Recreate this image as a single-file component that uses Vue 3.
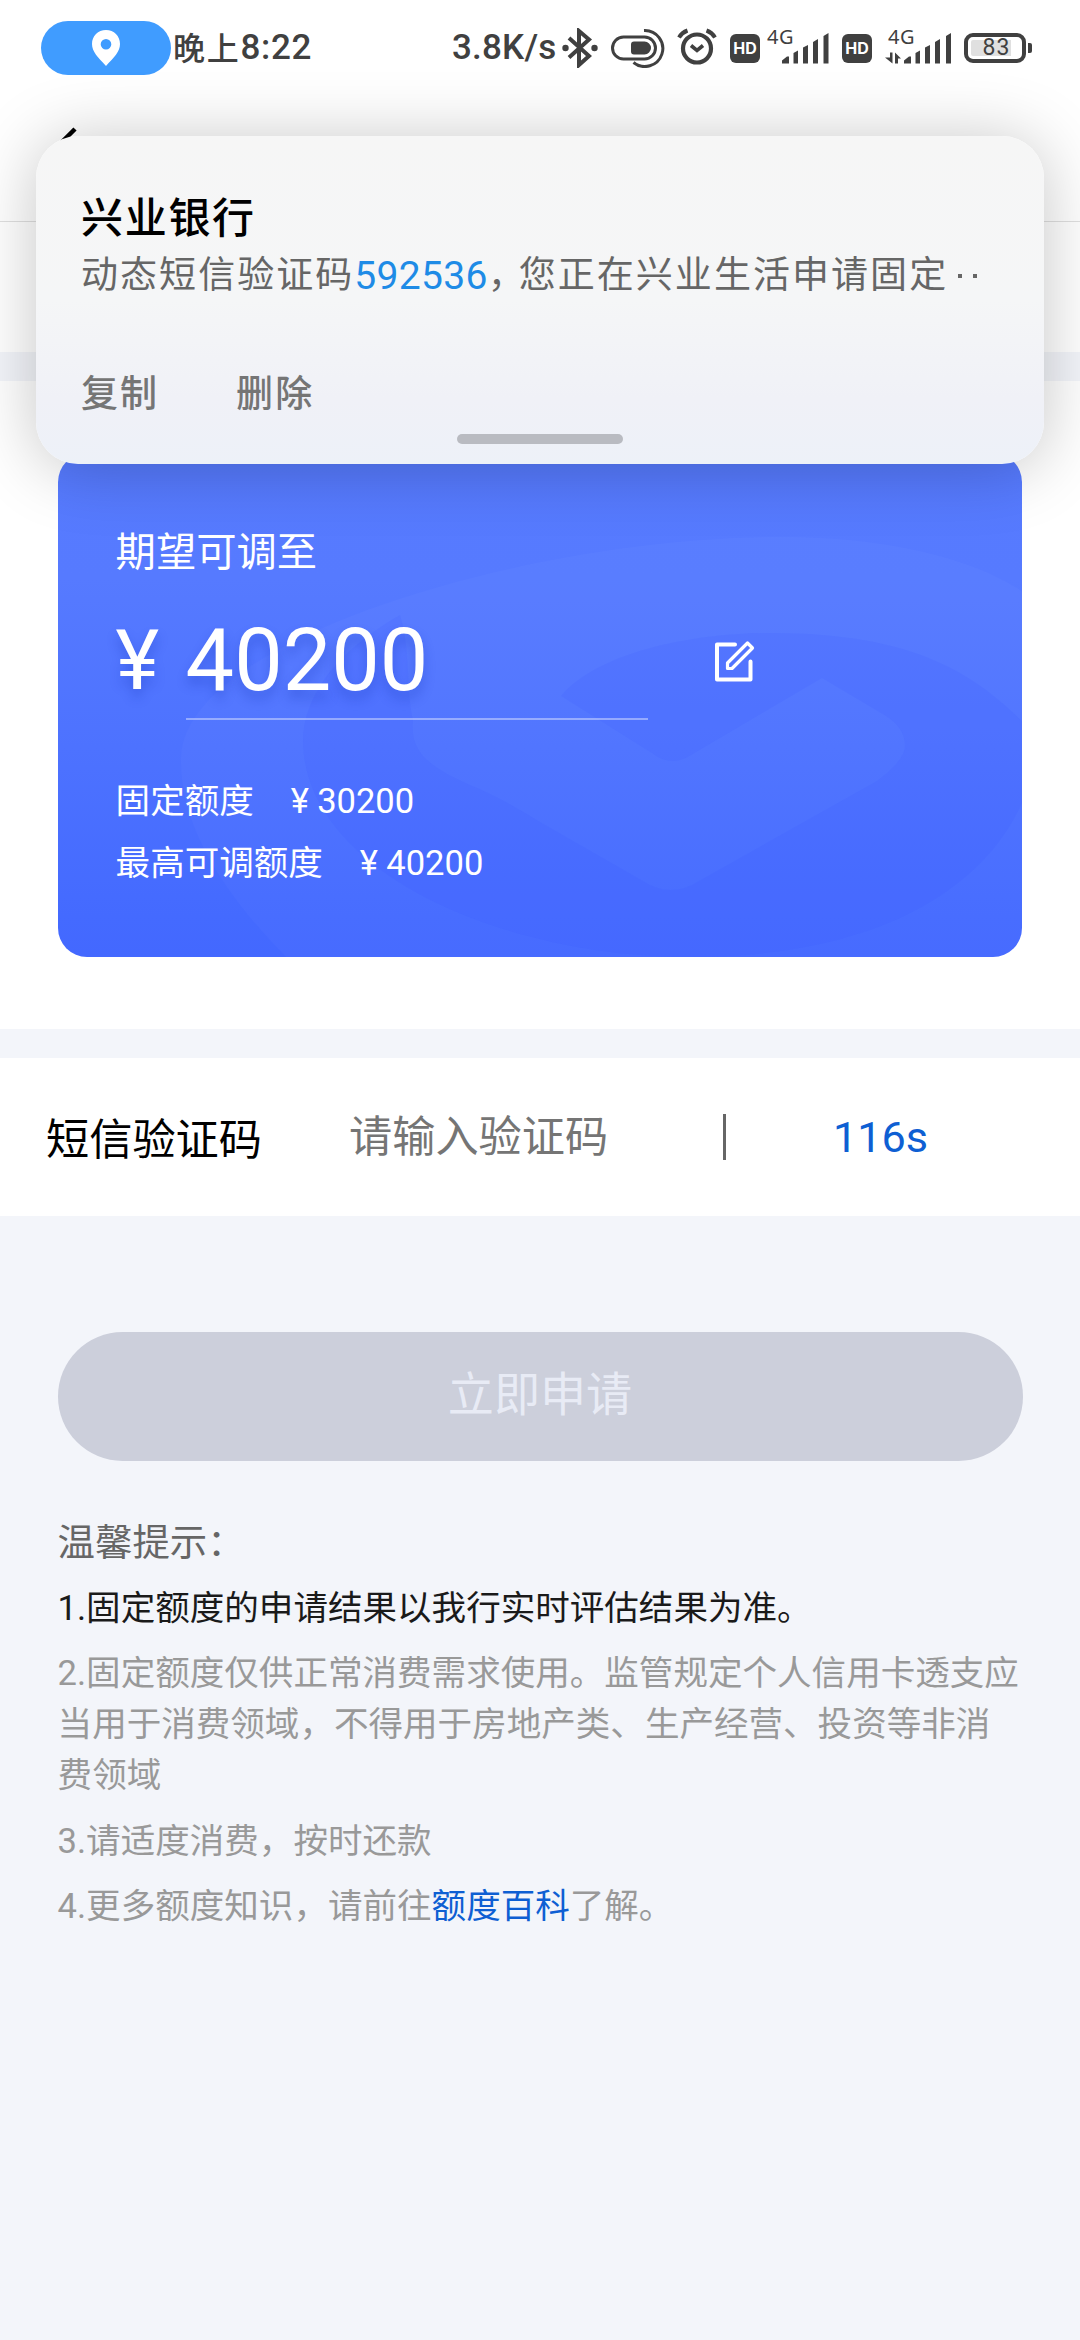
<script setup>
const limits = [
  { label: '固定额度', value: '30200' },
  { label: '最高可调额度', value: '40200' },
]
</script>

<template>
  <div class="screen">
    <header class="status">
      <div class="pill">
        <svg width="28" height="36" viewBox="0 0 28 36">
          <path fill="#fff" fill-rule="evenodd" d="M14 0C6 0 0 6 0 14c0 8 6 13 14 22 8-9 14-14 14-22C28 6 22 0 14 0zm0 9a5.3 5.3 0 1 1 0 10.600a5.300 5.300 0 0 1 0-10.600z" />
        </svg>
      </div>
      <div class="clock"><span class="cn">晚上</span>8:22</div>
      <div class="speed">3.8K/s</div>
      <svg class="bt" width="36" height="40" viewBox="0 0 36 40">
        <path d="M7 10l20 18-10 9V3l10 8.500L7 29.500" fill="none" stroke="#404040" stroke-width="4" stroke-linejoin="miter" />
        <circle cx="3.500" cy="20" r="3.200" fill="#404040" />
        <circle cx="32.500" cy="20" r="3.200" fill="#404040" />
      </svg>
      <svg class="toggle" width="54" height="40" viewBox="0 0 54 40" fill="none" stroke="#404040">
        <path d="M33 2.500a18 18 0 1 1-10.500 32" stroke-width="3" />
        <rect x="1.500" y="9" width="43" height="22" rx="11" stroke-width="3" />
        <path d="M23 13.500h10.500a6.500 6.500 0 0 1 0 13H23a3 3 0 0 1-3-3v-7a3 3 0 0 1 3-3z" fill="#404040" stroke="none" />
      </svg>
      <svg class="alarm" width="40" height="38" viewBox="0 0 40 38" fill="none" stroke="#404040">
        <circle cx="20" cy="20.500" r="14" stroke-width="4.200" />
        <path d="M14 17.500l6 5 6-5" stroke-width="3.600" />
        <path d="M2 9.500Q5 4.500 10.500 2.500M38 9.500Q35 4.500 29.500 2.500" stroke-width="4" />
      </svg>
      <div class="hd hd1">HD</div>
      <div class="cell cell1">
        <span class="net">4G</span>
        <svg width="63" height="35" viewBox="0 0 63 35" fill="#404040">
          <path d="M15 34.500v-3l5-4h2v7zM26.500 34.500V24l4.500-2.500v13zM36 34.500V18.500L41 16v18.500zM46 34.500V13l5-3v24.500zM56.500 34.500V7l5-3v30.500z" />
        </svg>
      </div>
      <div class="hd hd2">HD</div>
      <div class="cell cell2">
        <span class="net">4G</span>
        <svg width="67" height="35" viewBox="0 0 67 35" fill="#404040">
          <path d="M5 23.500h2.500v11L0 28.500h5zM10 34.500v-11l6 6h-3v5z" />
          <path d="M19 34.500v-3l5-4h2v7zM30.500 34.500V24l4.500-2.500v13zM40 34.500V18.500L45 16v18.500zM50 34.500V13l5-3v24.500zM61 34.500V7l5-3v30.500z" />
        </svg>
      </div>
      <div class="battery"><span>83</span></div>
      <i class="nub"></i>
    </header>

    <nav class="navbar">
      <svg width="40" height="56" viewBox="0 0 40 56">
        <path d="M32 5L9 28l23 23" fill="none" stroke="#000" stroke-width="4.500" />
      </svg>
    </nav>
    <div class="blank"></div>
    <div class="band"></div>

    <section class="quota">
      <div class="card">
        <svg class="mark" width="965" height="504" viewBox="58 453 965 504">
          <path fill="#fff" fill-opacity=".025" d="M181 757C185 640 520 540 770 537C900 535 985 565 1023 592V957H286C230 900 179 830 181 757z" />
          <path fill="#3355ff" fill-opacity=".11" d="M561 696C600 650 700 632 775 633C880 634 950 655 1008 708L1023 722V800C990 880 890 957 690 957C500 957 303 870 303 740C304 700 330 655 400 615C411 650 406 690 413 720C410 750 425 765 470 785Q500 797 540 822L643 881Q671 899 699 881L877 781Q905 760 905 746Q905 728 886 716L822 678L691 755Q671 768 652 753z" />
        </svg>
        <div class="want">期望可调至</div>
        <div class="amount">
          <span class="yen">¥</span>
          <span class="value">40200</span>
          <svg width="42" height="42" viewBox="0 0 42 42" fill="none" stroke="#fff" stroke-linejoin="round" stroke-linecap="round">
            <path d="M21 4.500H3V39.500H36.500V21.500" stroke-width="4" />
            <path d="M13.500 28.500V23L33.500 3l5 5-20.500 20.500z" stroke-width="3.200" />
          </svg>
        </div>
        <div v-for="row in limits" :key="row.label" class="limit">
          <span>{{ row.label }}</span>
          <span><span class="unit">¥</span>{{ row.value }}</span>
        </div>
      </div>
    </section>
    <div class="band"></div>

    <section class="sms">
      <label>短信验证码</label>
      <span class="placeholder">请输入验证码</span>
      <i class="divider"></i>
      <span class="countdown">116s</span>
    </section>

    <button class="apply" disabled>立即申请</button>

    <section class="tips">
      <h4>温馨提示：</h4>
      <p class="strong">1.固定额度的申请结果以我行实时评估结果为准。</p>
      <p>2.固定额度仅供正常消费需求使用。监管规定个人信用卡透支应当用于消费领域，不得用于房地产类、生产经营、投资等非消费领域</p>
      <p>3.请适度消费，按时还款</p>
      <p>4.更多额度知识，请前往<a>额度百科</a>了解。</p>
    </section>

    <aside class="notice">
      <div class="title">兴业银行</div>
      <div class="message">动态短信验证码<b>592536</b><span class="comma">，</span>您正在兴业生活申请固定<span class="dots"><i></i><i></i></span></div>
      <div class="actions"><span>复制</span><span>删除</span></div>
      <div class="handle"></div>
    </aside>
  </div>
</template>

<style>
body {
  margin: 0;
  background: #f3f5fa;
}
</style>

<style scoped>
.screen {
  position: relative;
  width: 1080px;
  height: 2340px;
  overflow: hidden;
  background: #f3f5fa;
  font-family: Roboto, "Noto Sans CJK SC", sans-serif;
}
.screen * {
  box-sizing: border-box;
}
.status {
  display: flex;
  align-items: flex-start;
  height: 96px;
  padding-left: 41px;
  background: #fff;
  color: #404040;
  white-space: nowrap;
}
.status > * {
  flex: none;
}
.pill {
  display: flex;
  align-items: center;
  justify-content: center;
  width: 130px;
  height: 54px;
  margin-top: 21px;
  border-radius: 27px;
  background: #409cff;
}
.clock {
  display: flex;
  width: 142px;
  margin: 27px 0 0 2px;
  font-size: 35px;
  line-height: 42px;
  font-weight: 500;
  letter-spacing: 0.700px;
}
.clock .cn {
  font-family: "Noto Sans CJK SC", sans-serif;
  font-size: 32px;
  line-height: 39px;
  letter-spacing: 1.700px;
}
.speed {
  width: 104px;
  margin: 27px 0 0 137px;
  font-size: 35px;
  line-height: 42px;
  font-weight: 500;
  letter-spacing: 0.200px;
}
.bt {
  margin: 28px 0 0 6px;
}
.toggle {
  margin: 28px 0 0 13px;
}
.alarm {
  margin: 28px 0 0 12px;
}
.hd {
  width: 30px;
  height: 29px;
  margin-top: 34px;
  border-radius: 6px;
  background: #404040;
  color: #fff;
  font: 700 16px/29px Inter, sans-serif;
  text-align: center;
}
.hd1 {
  margin-left: 13px;
}
.hd2 {
  margin-left: 12px;
}
.cell {
  display: grid;
  margin-top: 29px;
}
.cell > * {
  grid-area: 1 / 1;
}
.cell1 {
  margin-left: 7px;
}
.cell2 {
  margin-left: 13px;
}
.cell2 .net {
  padding-left: 3px;
}
.net {
  font: 400 20px/16px "Noto Sans", sans-serif;
  letter-spacing: 0.500px;
}
.battery {
  width: 62px;
  height: 30px;
  margin: 33px 0 0 12px;
  border: 4px solid #404040;
  border-radius: 9px;
  background: linear-gradient(90deg, #e0e0e0 40px, #fff 40px) content-box;
  padding: 3px;
  display: flex;
  align-items: center;
  justify-content: center;
  font: 400 23px/22px Roboto, sans-serif;
}
.battery span {
  letter-spacing: 1px;
  padding-left: 3px;
}
.nub {
  width: 4px;
  height: 10px;
  margin: 43px 0 0 2px;
  border-radius: 0 2px 2px 0;
  background: #404040;
}
.navbar {
  height: 126px;
  padding: 28px 0 0 43px;
  background: #fff;
  border-bottom: 1px solid #e0e0e0;
}
.blank {
  height: 130px;
  background: #fff;
}
.band {
  height: 29px;
  background: #f3f5fa;
}
.quota {
  height: 648px;
  padding: 72px 57.600px 0;
  background: #fff;
}
.card {
  position: relative;
  height: 504px;
  padding: 72px 58px 0;
  border-radius: 29px;
  overflow: hidden;
  background: linear-gradient(#577bff, #567aff 25%, #446aff 92%, #4368ff);
  color: #fff;
}
.card > * {
  position: relative;
}
.card > .mark {
  position: absolute;
  left: 0;
  top: 0;
}
.want {
  font-size: 40.320px;
  line-height: 56px;
}
.amount {
  display: flex;
  align-items: flex-start;
  height: 140px;
  text-shadow: 0 8px 12px rgba(20, 50, 180, 0.3);
}
.yen {
  width: 70px;
  margin-top: 34px;
  font-size: 83px;
  line-height: 92px;
}
.value {
  width: 462px;
  height: 139px;
  padding-top: 30px;
  font-size: 86.400px;
  line-height: 100px;
  white-space: nowrap;
  border-bottom: 2px solid rgba(255, 255, 255, 0.4);
}
.amount svg {
  margin: 59px 0 0 66px;
}
.limit {
  display: flex;
  gap: 28.800px;
  height: 62.300px;
  font-size: 34.560px;
  line-height: 62.300px;
}
.limit:nth-last-child(2) {
  margin-top: 49px;
}
.unit {
  display: inline-block;
  width: 34.560px;
  text-align: center;
}
.sms {
  display: flex;
  height: 158px;
  padding: 57px 0 0 46px;
  background: #fff;
  font-size: 43.200px;
  line-height: 46px;
  white-space: nowrap;
}
.sms label {
  width: 303px;
  padding-top: 3px;
}
.placeholder {
  width: 374px;
  color: #757575;
}
.divider {
  width: 3px;
  height: 46px;
  margin-top: -1px;
  background: #666;
}
.countdown {
  margin-left: 107px;
  color: #0e5fd3;
}
.apply {
  display: block;
  width: 965px;
  height: 129px;
  margin: 116px auto 0;
  padding: 0 0 4px;
  border: 0;
  border-radius: 65px;
  background: #cccfdb;
  color: #e8ebf5;
  font: 400 46.080px/122px Roboto, "Noto Sans CJK SC", sans-serif;
}
.tips {
  padding: 56px 57.600px 0;
  font-size: 34.560px;
  line-height: 51px;
  color: #999;
}
.tips h4 {
  margin: 0 0 14px;
  font-size: 37.440px;
  font-weight: 400;
  line-height: 52px;
  color: #666;
}
.tips p {
  margin: 0 0 14.400px;
}
.tips .strong {
  color: #1a1a1a;
}
.tips a {
  color: #0e5fd3;
}
.notice {
  position: absolute;
  left: 36px;
  top: 136px;
  width: 1008px;
  height: 328px;
  padding: 54px 46px 0 45px;
  border-radius: 42px;
  background: linear-gradient(#f6f6f6, #f5f6f7 50%, #f0f1f7 80%, #edf1f8);
  box-shadow: 0 4px 68px rgba(0, 0, 0, 0.23);
  white-space: nowrap;
}
.title {
  font-size: 42px;
  line-height: 58px;
  font-weight: 500;
  letter-spacing: 1.700px;
  color: #000;
}
.message {
  display: flex;
  align-items: center;
  height: 54px;
  margin-top: 1px;
  font-size: 37px;
  line-height: 54px;
  letter-spacing: 2.050px;
  color: #666;
}
.message b {
  font-size: 39px;
  font-weight: 400;
  letter-spacing: 0.300px;
  color: #1e8be6;
}
.comma {
  width: 31px;
  letter-spacing: 0;
  font-feature-settings: "halt";
}
.dots {
  display: flex;
  gap: 11px;
  margin-left: 10px;
}
.dots i {
  width: 4px;
  height: 4px;
  background: #666;
}
.actions {
  display: flex;
  gap: 77px;
  margin-top: 65px;
  font-size: 37px;
  line-height: 54px;
  font-weight: 500;
  letter-spacing: 2.050px;
  color: #757575;
}
.handle {
  width: 166px;
  height: 10px;
  margin: 12px 0 0 376px;
  border-radius: 5px;
  background: #b9bbc1;
}
</style>
